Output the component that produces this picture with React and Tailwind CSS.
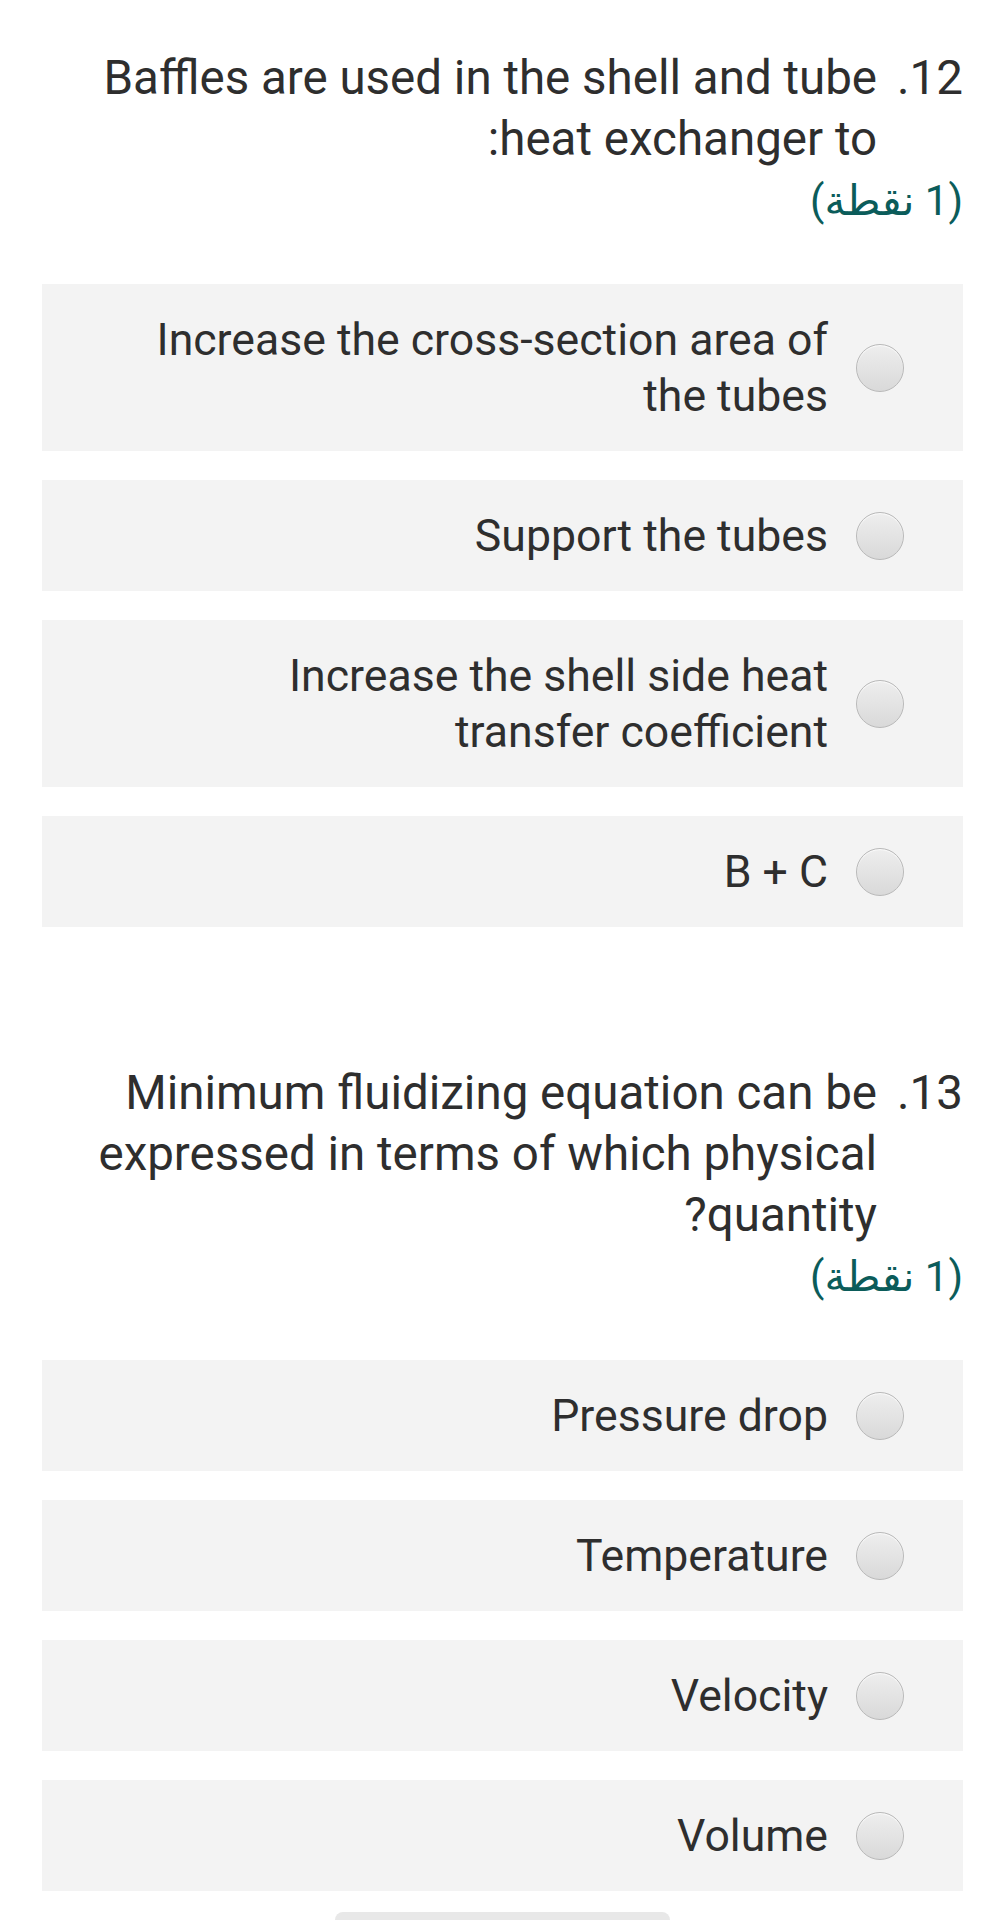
import React from 'react';

const questions = [
  {
    num: '12.',
    text: 'Baffles are used in the shell and tube heat exchanger to:',
    options: [
      'Increase the cross-section area of the tubes',
      'Support the tubes',
      'Increase the shell side heat transfer coefficient',
      'B + C',
    ],
  },
  {
    num: '13.',
    text: 'Minimum fluidizing equation can be expressed in terms of which physical quantity?',
    options: ['Pressure drop', 'Temperature', 'Velocity', 'Volume'],
  },
];

function Radio() {
  return (
    <div className="w-[48px] h-[48px] shrink-0 rounded-full border border-[#b9b9b9] bg-gradient-to-b from-[#eeeeee] to-[#d9d9d9] shadow-[inset_0_1px_1px_rgba(255,255,255,0.8)]"></div>
  );
}

function Question({ q }) {
  return (
    <section>
      <div className="pl-[48px] text-[47.5px] leading-[61px] text-[#2e2e2e]">
        <div className="flex items-start gap-[20px]">
          <span className="shrink-0">{q.num}</span>
          <div className="flex-1">{q.text}</div>
        </div>
        <div className="text-[#0b5c5a] text-[42px]">(1 نقطة)</div>
      </div>

      <div className="mt-[53px] flex flex-col gap-[29px]">
        {q.options.map((opt) => (
          <label key={opt} className="flex items-center gap-[28px] bg-[#f3f3f3] ps-[59px] pe-[100px] py-[27.5px]">
            <Radio />
            <span className="text-[44.6px] leading-[56px] text-[#2e2e2e]">{opt}</span>
          </label>
        ))}
      </div>
    </section>
  );
}

export default function App() {
  return (
    <div dir="rtl" className="w-[1005px] h-[1920px] overflow-hidden bg-white relative" style={{ fontFamily: 'Roboto, "Noto Sans", "DejaVu Sans", sans-serif' }}>
      <div className="pt-[48px] px-[42px] flex flex-col gap-[136px]">
        {questions.map((q) => (
          <Question key={q.num} q={q} />
        ))}
      </div>
      <div className="absolute bottom-0 left-[335px] w-[335px] h-[8px] rounded-t-full bg-[#e8e8e8]"></div>
    </div>
  );
}
